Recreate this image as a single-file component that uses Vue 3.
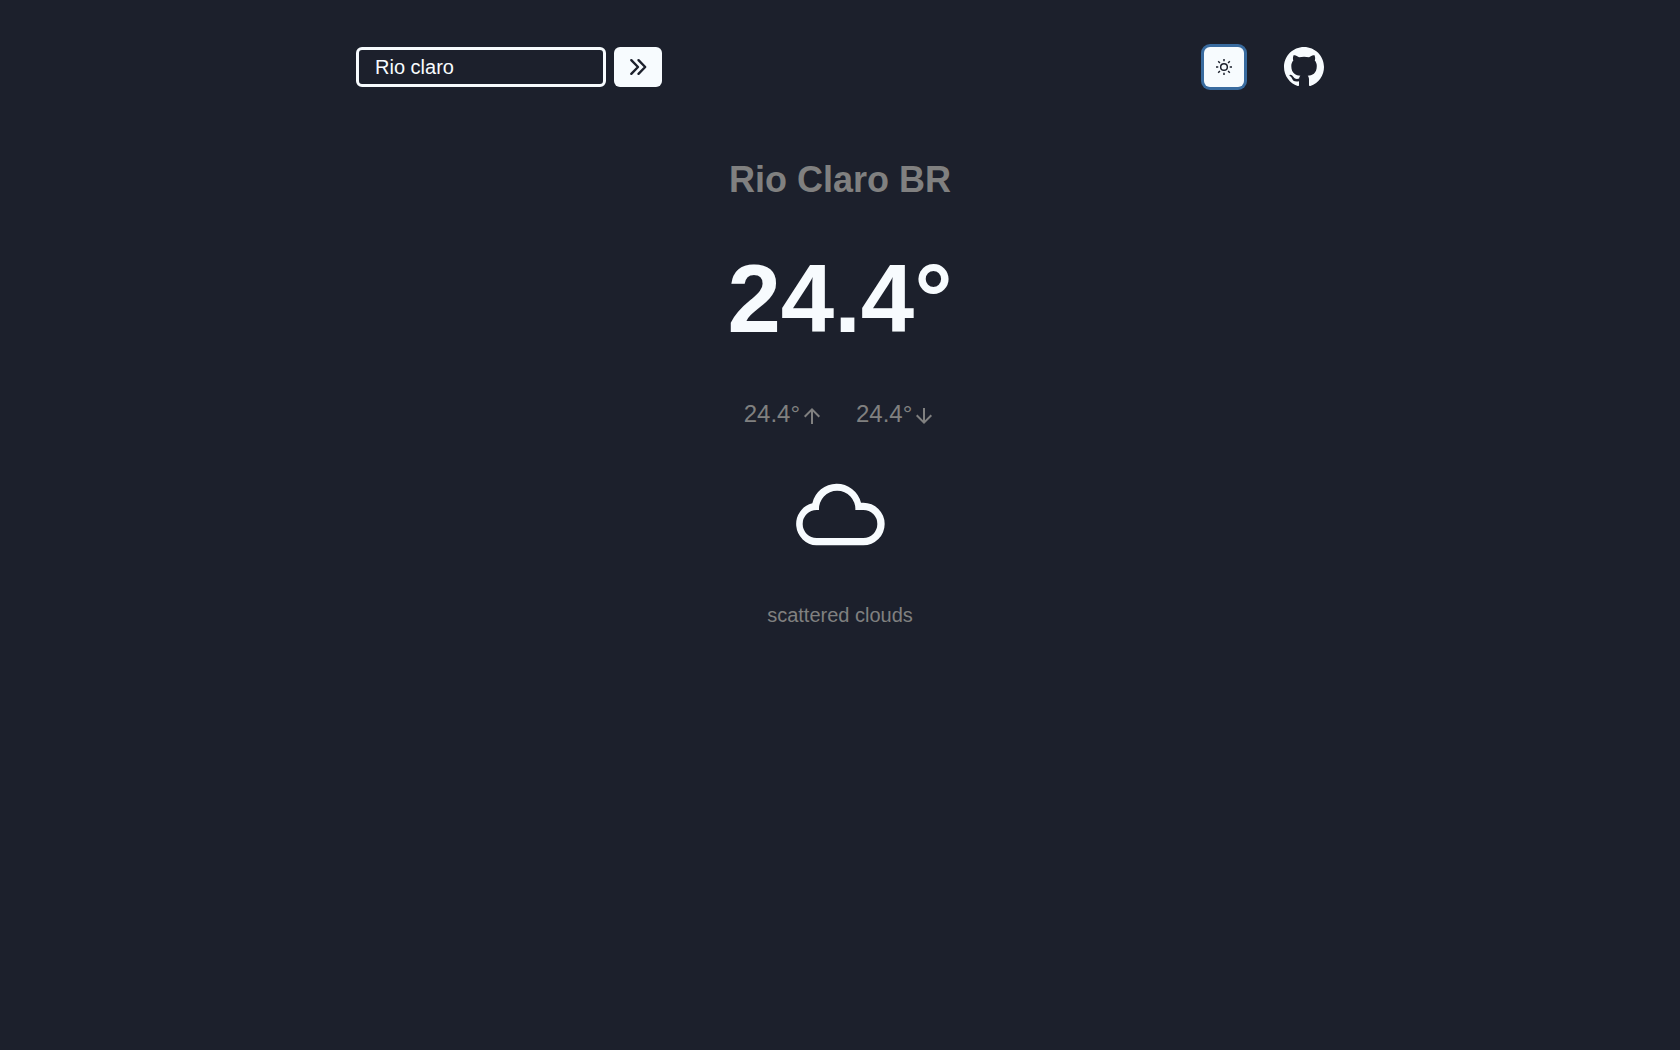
<script setup>
import { ref } from 'vue'

const city = ref('Rio claro')
const weather = {
  place: 'Rio Claro BR',
  temp: '24.4°',
  max: '24.4°',
  min: '24.4°',
  description: 'scattered clouds',
}
</script>

<template>
  <div class="page">
    <header class="bar">
      <form class="search" @submit.prevent>
        <input v-model="city" class="field" type="text" aria-label="City" />
        <button class="btn submit" type="submit" aria-label="Search">
          <svg class="icon" viewBox="0 0 24 24" fill="none" stroke="currentColor" stroke-width="2.4" stroke-linecap="round" stroke-linejoin="round">
            <path d="M12.5 5.2l6.7 6.8-6.7 6.8M5.3 5.2l6.7 6.8-6.7 6.8" />
          </svg>
        </button>
      </form>
      <div class="actions">
        <button class="btn theme" type="button" aria-label="Toggle theme">
          <svg class="sun" viewBox="0 0 24 24" fill="none" stroke="currentColor" stroke-width="2.2">
            <circle cx="12" cy="12" r="5" />
            <path d="M12 0v3.4M12 20.6v3.4M0 12h3.4M20.6 12h3.4M3.3 3.3l2.6 2.6M18.1 18.1l2.6 2.6M3.3 20.7l2.6-2.6M18.1 5.9l2.6-2.6" />
          </svg>
        </button>
        <a class="github" href="https://github.com" aria-label="GitHub">
          <svg viewBox="0 0 16 16" fill="currentColor">
            <path d="M8 0C3.58 0 0 3.58 0 8c0 3.54 2.29 6.53 5.47 7.59.4.07.55-.17.55-.38 0-.19-.01-.82-.01-1.49-2.01.37-2.53-.49-2.69-.94-.09-.23-.48-.94-.82-1.13-.28-.15-.68-.52-.01-.53.63-.01 1.08.58 1.23.82.72 1.21 1.87.87 2.33.66.07-.52.28-.87.51-1.07-1.78-.2-3.64-.89-3.64-3.95 0-.87.31-1.59.82-2.15-.08-.2-.36-1.02.08-2.12 0 0 .67-.21 2.2.82.64-.18 1.32-.27 2-.27s1.36.09 2 .27c1.53-1.04 2.2-.82 2.2-.82.44 1.1.16 1.92.08 2.12.51.56.82 1.27.82 2.15 0 3.07-1.87 3.75-3.65 3.95.29.25.54.73.54 1.48 0 1.07-.01 1.93-.01 2.2 0 .21.15.46.55.38A8.01 8.01 0 0 0 16 8c0-4.42-3.58-8-8-8z" />
          </svg>
        </a>
      </div>
    </header>

    <main class="weather">
      <h2 class="place">{{ weather.place }}</h2>
      <h1 class="temp">{{ weather.temp }}</h1>
      <div class="range">
        <p>{{ weather.max }}<svg class="icon" viewBox="0 0 24 24" fill="currentColor"><path d="M4 12l1.41 1.41L11 7.83V20h2V7.83l5.58 5.59L20 12l-8-8-8 8z" /></svg></p>
        <p>{{ weather.min }}<svg class="icon" viewBox="0 0 24 24" fill="currentColor"><path d="M20 12l-1.41-1.41L13 16.17V4h-2v12.17l-5.58-5.59L4 12l8 8 8-8z" /></svg></p>
      </div>
      <svg class="cloud" viewBox="0 0 300 300" fill="currentColor" fill-rule="evenodd" aria-hidden="true">
        <path d="M79 244H220A64 64 0 0 0 220 116H213A75 75 0 0 0 67 118A64 64 0 0 0 79 244ZM80 222H220A42 42 0 0 0 220 138H196A54.6 54.6 0 1 0 87 138H80A42 42 0 0 0 80 222Z" />
      </svg>
      <p class="description">{{ weather.description }}</p>
    </main>
  </div>
</template>

<style>
body {
  margin: 0;
  background: #1c202c;
}
</style>

<style scoped>
.page {
  box-sizing: border-box;
  max-width: 1000px;
  margin: 0 auto;
  padding: 47px 16px;
  color: #f7fbfe;
  font-family: "Liberation Sans", Arial, sans-serif;
  font-size: 20px;
}
h1,
h2,
p {
  margin: 0;
}
.bar,
.search,
.actions {
  display: flex;
  align-items: center;
}
.bar {
  justify-content: space-between;
}
.search {
  gap: 8px;
}
.actions {
  gap: 40px;
}
.field {
  box-sizing: border-box;
  width: 250px;
  height: 40px;
  padding: 0 16px;
  border: 3px solid #f7fbfe;
  border-radius: 6px;
  outline: none;
  background: transparent;
  color: inherit;
  font: inherit;
}
.btn {
  display: flex;
  align-items: center;
  justify-content: center;
  height: 40px;
  padding: 0;
  border: 0;
  border-radius: 6px;
  background: #f7fbfe;
  color: #1c202c;
}
.submit {
  width: 48px;
}
.theme {
  width: 40px;
  box-shadow: 0 0 0 3px #396b9f;
}
.icon {
  width: 24px;
  height: 24px;
}
.sun {
  width: 16px;
  height: 16px;
}
.github,
.github svg {
  display: block;
  width: 40px;
  height: 40px;
  color: inherit;
}
.weather {
  display: flex;
  flex-direction: column;
  align-items: center;
  margin-top: 69px;
}
.place {
  color: #808080;
  font-size: 36px;
  line-height: 48px;
}
.temp {
  margin-top: 40px;
  font-size: 96px;
  line-height: 110px;
}
.range {
  display: flex;
  gap: 32px;
  margin-top: 42px;
  color: #808080;
  font-size: 24px;
  line-height: 36px;
}
.range .icon {
  vertical-align: middle;
}
.cloud {
  width: 100px;
  height: 100px;
  margin-top: 32px;
}
.description {
  margin-top: 36px;
  color: #808080;
  line-height: 30px;
}
</style>
